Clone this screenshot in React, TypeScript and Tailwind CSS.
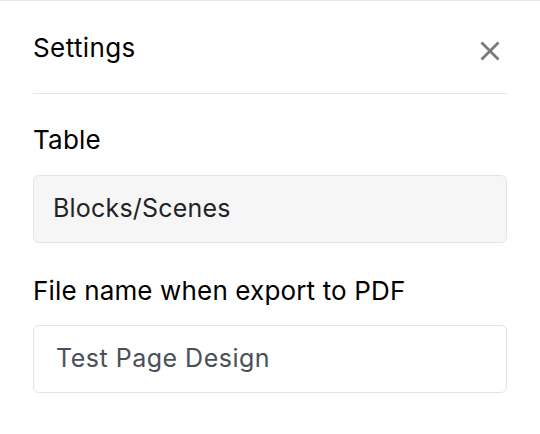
export default function App() {
  return (
    <div className="min-h-screen bg-white border-t border-[#e3e6ea] px-[33px] pb-8 font-['Inter','Liberation_Sans',sans-serif]">
      {/* Header */}
      <div className="flex items-center justify-between pt-[31px] pb-[29px] border-b border-[#e5e7eb]">
        <h2 className="text-[26px] leading-[32px] tracking-[0.4px] text-black">Settings</h2>
        <button className="mt-[6px] mr-[7px] text-[#7a7a7a]">
          <svg width="20" height="20" viewBox="0 0 20 20" fill="none" stroke="currentColor" strokeWidth="2.8" strokeLinecap="butt">
            <path d="M1.5 1.5L18.5 18.5M18.5 1.5L1.5 18.5" />
          </svg>
        </button>
      </div>

      {/* Table */}
      <div className="mt-[30px]">
        <div className="text-[26px] leading-[32px] tracking-[0.2px] text-black">Table</div>
        <div className="mt-[19px] h-[68px] flex items-center pl-[19px] bg-[#f6f6f6] border border-[#e2e4e9] rounded-[6px]">
          <span className="text-[25px] tracking-[0.2px] text-[#1f2328]">Blocks/Scenes</span>
        </div>
      </div>

      {/* File name */}
      <div className="mt-[32px]">
        <div className="text-[26px] leading-[32px] tracking-[0.15px] text-black">File name when export to PDF</div>
        <div className="mt-[18px] h-[68px] flex items-center pl-[22px] bg-white border border-[#e2e4e9] rounded-[6px]">
          <span className="text-[25px] tracking-[0.5px] text-[#4a5058]">Test Page Design</span>
        </div>
      </div>
    </div>
  );
}
